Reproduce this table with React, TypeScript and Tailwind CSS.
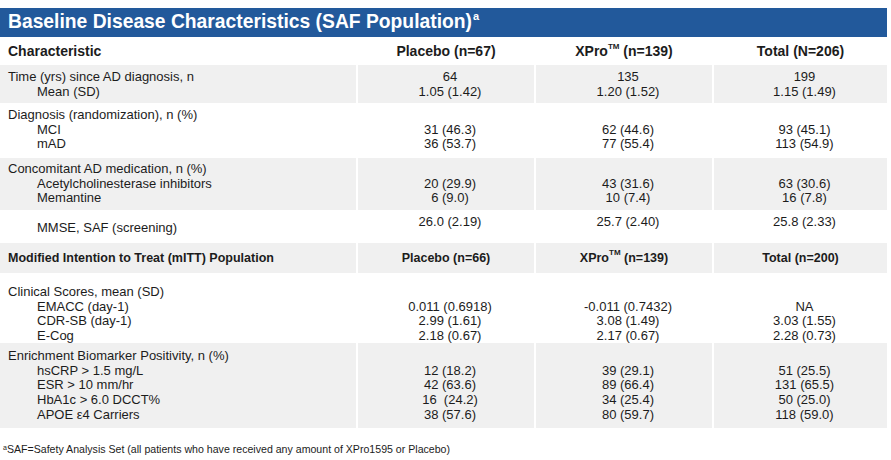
import React from "react";

const cols = "grid grid-cols-[356px_176px_176px_173px] gap-x-[2px]";

type Row = {
  head?: string;
  items: string[];
  values: [string[], string[], string[]];
  h: string;
  pt: string;
  valPt?: string;
  inline?: boolean;
  gray?: boolean;
};

const baseline: Row[] = [
  {
    head: "Time (yrs) since AD diagnosis, n",
    items: ["Mean (SD)"],
    values: [["64", "1.05 (1.42)"], ["135", "1.20 (1.52)"], ["199", "1.15 (1.49)"]],
    h: "h-[38px]",
    pt: "pt-[5px]",
    inline: true,
    gray: true,
  },
  {
    head: "Diagnosis (randomization), n (%)",
    items: ["MCI", "mAD"],
    values: [["31 (46.3)", "36 (53.7)"], ["62 (44.6)", "77 (55.4)"], ["93 (45.1)", "113 (54.9)"]],
    h: "h-[55px]",
    pt: "pt-[5px]",
  },
  {
    head: "Concomitant AD medication, n (%)",
    items: ["Acetylcholinesterase inhibitors", "Memantine"],
    values: [["20 (29.9)", "6 (9.0)"], ["43 (31.6)", "10 (7.4)"], ["63 (30.6)", "16 (7.8)"]],
    h: "h-[52px]",
    pt: "pt-[4px]",
    gray: true,
  },
  {
    items: ["MMSE, SAF (screening)"],
    values: [["26.0 (2.19)"], ["25.7 (2.40)"], ["25.8 (2.33)"]],
    h: "h-[33px]",
    pt: "pt-[11px]",
    valPt: "pt-[5px]",
  },
];

const mitt: Row[] = [
  {
    head: "Clinical Scores, mean (SD)",
    items: ["EMACC (day-1)", "CDR-SB (day-1)", "E-Cog"],
    values: [
      ["0.011 (0.6918)", "2.99 (1.61)", "2.18 (0.67)"],
      ["-0.011 (0.7432)", "3.08 (1.49)", "2.17 (0.67)"],
      ["NA", "3.03 (1.55)", "2.28 (0.73)"],
    ],
    h: "h-[70px]",
    pt: "pt-[12px]",
  },
  {
    head: "Enrichment Biomarker Positivity, n (%)",
    items: ["hsCRP > 1.5 mg/L", "ESR > 10 mm/hr", "HbA1c > 6.0 DCCT%", "APOE ε4 Carriers"],
    values: [
      ["12 (18.2)", "42 (63.6)", "16  (24.2)", "38 (57.6)"],
      ["39 (29.1)", "89 (66.4)", "34 (25.4)", "80 (59.7)"],
      ["51 (25.5)", "131 (65.5)", "50 (25.0)", "118 (59.0)"],
    ],
    h: "h-[85px]",
    pt: "pt-[6px]",
    gray: true,
  },
];

function BodyRow({ row }: { row: Row }) {
  const bg = row.gray ? "bg-[#f0f0f0]" : "bg-white";
  return (
    <div className={`${cols} ${row.h}`}>
      <div className={`${bg} ${row.pt} pl-[8px]`}>
        {row.head && <div>{row.head}</div>}
        {row.items.map((it) => (
          <div key={it} className="pl-[29px]">
            {it}
          </div>
        ))}
      </div>
      {row.values.map((vals, i) => (
        <div key={i} className={`${bg} ${row.valPt ?? row.pt} pl-[8px] text-center`}>
          {row.head && !row.inline && <div>&nbsp;</div>}
          {vals.map((v, j) => (
            <div key={j} className="whitespace-pre">
              {v}
            </div>
          ))}
        </div>
      ))}
    </div>
  );
}

function XPro({ n }: { n: string }) {
  return (
    <span>
      XPro<sup className="relative top-[-1px] text-[8px] align-super">TM</sup> (n={n})
    </span>
  );
}

export default function App() {
  return (
    <div className="w-[891px] h-[460px] bg-white pt-[8px] font-['Liberation_Sans',Arial,sans-serif] text-[13px] leading-[14.7px] text-[#1c1c1c]">
      <div className="w-[887px] h-[29px] bg-[#22599b] pl-[8px] flex items-center text-white font-bold text-[19.3px]">
        Baseline Disease Characteristics (SAF Population)
        <span className="self-start mt-[3px] ml-[1px] text-[11px] leading-none">a</span>
      </div>

      <div className={`${cols} h-[28px] items-center font-bold text-[14px]`}>
        <div className="pl-[8px]">Characteristic</div>
        <div className="text-center">Placebo (n=67)</div>
        <div className="text-center">
          <XPro n="139" />
        </div>
        <div className="text-center">Total (N=206)</div>
      </div>

      {baseline.map((r, i) => (
        <BodyRow key={i} row={r} />
      ))}

      <div className={`${cols} h-[30px] font-bold text-[12.5px]`}>
        <div className="bg-[#f0f0f0] pl-[8px] flex items-center">
          Modified Intention to Treat (mITT) Population
        </div>
        <div className="bg-[#f0f0f0] flex items-center justify-center">Placebo (n=66)</div>
        <div className="bg-[#f0f0f0] flex items-center justify-center">
          <XPro n="139" />
        </div>
        <div className="bg-[#f0f0f0] flex items-center justify-center">Total (n=200)</div>
      </div>

      {mitt.map((r, i) => (
        <BodyRow key={i} row={r} />
      ))}

      <div className="mt-[15px] pl-[3px] text-[10.6px] leading-[12px]">
        <span className="relative top-[-3px] text-[7px]">a</span>SAF=Safety Analysis Set (all patients who have received any
        amount of XPro1595 or Placebo)
      </div>
    </div>
  );
}
